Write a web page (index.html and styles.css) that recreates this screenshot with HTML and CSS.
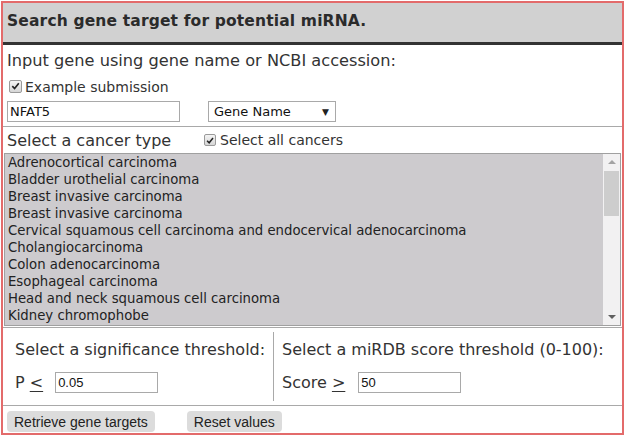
FILE: index.html
```html
<!DOCTYPE html>
<html>
<head>
<meta charset="utf-8">
<link rel="stylesheet" href="styles.css">
</head>
<body>
<div class="panel">
  <div class="header">Search gene target for potential miRNA.</div>
  <div class="gene">
    <div class="row title-row">Input gene using gene name or NCBI accession:</div>
    <div class="row check-row">
      <span class="cbox"><svg viewBox="0 0 12 12" width="12" height="12"><path d="M2.5 6.2 L5 8.8 L9.6 3" fill="none" stroke="#222" stroke-width="1.8"/></svg></span>
      <span>Example submission</span>
    </div>
    <div class="row input-row">
      <div class="textbox gene-box">NFAT5</div>
      <div class="selectbox"><span>Gene Name</span><span class="arrow">&#9660;</span></div>
    </div>
  </div>
  <div class="cancer">
    <div class="row cancer-head">
      <span class="label">Select a cancer type</span>
      <span class="cbox small"><svg viewBox="0 0 12 12" width="11" height="11"><path d="M2.5 6.2 L5 8.8 L9.6 3" fill="none" stroke="#222" stroke-width="1.8"/></svg></span>
      <span class="all">Select all cancers</span>
    </div>
    <div class="listbox">
      <div class="items">
        <div>Adrenocortical carcinoma</div>
        <div>Bladder urothelial carcinoma</div>
        <div>Breast invasive carcinoma</div>
        <div>Breast invasive carcinoma</div>
        <div>Cervical squamous cell carcinoma and endocervical adenocarcinoma</div>
        <div>Cholangiocarcinoma</div>
        <div>Colon adenocarcinoma</div>
        <div>Esophageal carcinoma</div>
        <div>Head and neck squamous cell carcinoma</div>
        <div>Kidney chromophobe</div>
      </div>
      <div class="scrollbar">
        <div class="sb-arrow up"></div>
        <div class="sb-track"><div class="sb-thumb"></div></div>
        <div class="sb-arrow down"></div>
      </div>
    </div>
  </div>
  <div class="thresholds">
    <div class="col left">
      <div class="tlabel">Select a significance threshold:</div>
      <div class="trow"><span>P <u>&lt;</u></span><div class="textbox num p-box">0.05</div></div>
    </div>
    <div class="col right">
      <div class="tlabel">Select a miRDB score threshold (0-100):</div>
      <div class="trow"><span>Score <u>&gt;</u></span><div class="textbox num s-box">50</div></div>
    </div>
  </div>
  <div class="buttons">
    <span class="btn">Retrieve gene targets</span>
    <span class="btn reset">Reset values</span>
  </div>
</div>
</body>
</html>
```
FILE: styles.css
```css
* { box-sizing: border-box; }
html, body { margin: 0; padding: 0; background: #fff; }
body {
  font-family: "DejaVu Sans", Verdana, sans-serif;
  color: #333;
}
.panel {
  margin: 1px 0 0 1px;
  width: 623px;
  height: 434px;
  border: 2px solid #e36b6b;
  display: flex;
  flex-direction: column;
}
.header {
  flex: none;
  height: 42px;
  background: #d1d1d1;
  border-bottom: 3px solid #333;
  font-weight: bold;
  font-size: 15.5px;
  letter-spacing: 0.15px;
  color: #2b2b2b;
  padding: 9px 0 0 4px;
}
.gene {
  flex: none;
  padding: 5px 4px 0 4px;
  border-bottom: 1px solid #a9a9a9;
}
.row { display: flex; align-items: center; }
.title-row { height: 20px; font-size: 16.2px; color: #333; }
.check-row { height: 20px; margin-top: 6px; font-size: 14px; padding-left: 2px; }
.check-row span:last-child { padding-top: 2px; }
.cbox {
  width: 13px; height: 13px;
  border: 1px solid #9a9a9a;
  border-radius: 2px;
  background: linear-gradient(#f4f4f4, #d6d6d6);
  display: inline-flex; align-items: center; justify-content: center;
  margin-right: 3px;
}
.cbox svg { display: block; }
.input-row { margin-top: 5px; height: 21px; margin-bottom: 4px; }
.textbox {
  border: 1px solid #a9a9a9;
  height: 21px;
  display: flex; align-items: center;
  padding-left: 2px;
  font-size: 13px;
  color: #111;
}
.gene-box { width: 173px; }
.selectbox {
  margin-left: 28px;
  width: 128px; height: 21px;
  border: 1px solid #a9a9a9;
  display: flex; align-items: center; justify-content: space-between;
  padding: 0 6px 0 5px;
  font-size: 13px;
  color: #111;
}
.selectbox .arrow { font-size: 9px; color: #222; }
.cancer { flex: none; padding: 0 1px; }
.cancer-head { height: 20px; margin-top: 3px; padding-left: 3px; }
.cancer-head .label { font-size: 16px; width: 197px; }
.cancer-head .cbox { width: 12px; height: 12px; margin-right: 4px; }
.cancer-head .all { font-size: 14px; }
.listbox {
  margin-top: 3px;
  height: 173px;
  border: 1px solid #a0a0a0;
  background: #cdcbce;
  display: flex;
}
.items {
  flex: 1;
  padding: 0 0 0 3px;
  font-size: 13.25px;
  color: #222;
}
.items div { height: 17px; line-height: 17px; white-space: nowrap; }
.scrollbar {
  width: 17px;
  background: #f2f1f2;
  display: flex; flex-direction: column;
}
.sb-arrow { height: 17px; position: relative; }
.sb-arrow::after {
  content: "";
  position: absolute;
  left: 5px;
  border-left: 4px solid transparent;
  border-right: 4px solid transparent;
}
.sb-arrow.up::after { top: 6px; border-bottom: 4px solid #a3a3a3; }
.sb-arrow.down::after { top: 7px; border-top: 4px solid #606060; }
.sb-track { flex: 1; padding: 0 1px; }
.sb-thumb { height: 45px; background: #cdcdcd; }
.thresholds {
  flex: none;
  margin-top: 1px;
  border-top: 1px solid #a9a9a9;
  border-bottom: 1px solid #a9a9a9;
  height: 79px;
  display: flex;
  padding: 4px 0;
}
.col { padding-top: 8px; }
.col.left { width: 271px; padding-left: 12px; border-right: 1px solid #a9a9a9; }
.col.right { padding-left: 8px; }
.tlabel { font-size: 16px; height: 20px; line-height: 20px; }
.trow { display: flex; align-items: center; margin-top: 12px; font-size: 16px; height: 21px; }
.trow u { text-decoration-thickness: 1px; text-underline-offset: 3px; }
.num { font-family: "Liberation Sans", Arial, sans-serif; font-size: 13px; height: 21px; width: 103px; }
.p-box { margin-left: 12px; }
.s-box { margin-left: 13px; }
.buttons { flex: none; display: flex; padding: 5px 0 0 4px; }
.btn {
  background: #dcdcdc;
  border-radius: 4px;
  font-family: "Liberation Sans", Arial, sans-serif;
  font-size: 14px;
  color: #222;
  height: 21px;
  display: inline-flex; align-items: center;
  padding: 0 7px;
}
.btn.reset { margin-left: 32px; }
```
